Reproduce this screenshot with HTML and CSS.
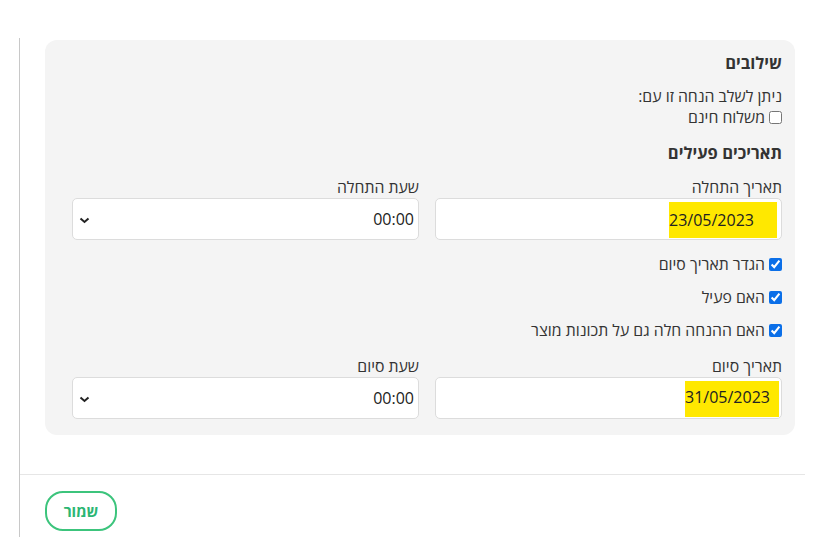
FILE: index.html
```html
<!DOCTYPE html>
<html lang="he" dir="rtl">
<head>
  <meta charset="utf-8">
  <title>הגדרות הנחה</title>
  <link rel="stylesheet" href="styles.css">
</head>
<body>
  <div class="page">
    <!-- Settings panel -->
    <div class="panel">
      <h3 class="section-title">שילובים</h3>
      <p class="text">ניתן לשלב הנחה זו עם:</p>
      <label class="check"><input type="checkbox"> משלוח חינם</label>

      <h3 class="section-title dates-title">תאריכים פעילים</h3>
      <div class="row">
        <div class="field">
          <div class="label">תאריך התחלה</div>
          <div class="control date"><span class="mark mark-start">23/05/2023</span></div>
        </div>
        <div class="field">
          <div class="label">שעת התחלה</div>
          <div class="control select">
            <span>00:00</span>
            <svg width="11" height="7" viewBox="0 0 11 7"><path d="M1.5 1.5 L5.5 5 L9.5 1.5" fill="none" stroke="#222" stroke-width="2"/></svg>
          </div>
        </div>
      </div>

      <label class="check check-row first"><input type="checkbox" checked> הגדר תאריך סיום</label>
      <label class="check check-row"><input type="checkbox" checked> האם פעיל</label>
      <label class="check check-row"><input type="checkbox" checked> האם ההנחה חלה גם על תכונות מוצר</label>

      <div class="row end-row">
        <div class="field">
          <div class="label">תאריך סיום</div>
          <div class="control date"><span class="mark mark-end">31/05/2023</span></div>
        </div>
        <div class="field">
          <div class="label">שעת סיום</div>
          <div class="control select">
            <span>00:00</span>
            <svg width="11" height="7" viewBox="0 0 11 7"><path d="M1.5 1.5 L5.5 5 L9.5 1.5" fill="none" stroke="#222" stroke-width="2"/></svg>
          </div>
        </div>
      </div>
    </div>

    <!-- Footer -->
    <div class="footer">
      <button class="save">שמור</button>
    </div>
  </div>
</body>
</html>
```

FILE: styles.css
```css
body {
  margin: 0;
  background: #fff;
  font-family: "Open Sans", "Noto Sans", sans-serif;
  color: #333;
  font-size: 15.8px;
}
/* left rule + content column */
.page {
  direction: ltr;
  margin: 38px auto 0 19px;
  width: 786px;
  min-height: 499px;
  border-left: 1px solid #c8c8c8;
  padding-top: 2px;
  box-sizing: border-box;
}
.panel {
  direction: rtl;
  margin-left: 25px;
  width: 750px;
  box-sizing: border-box;
  background: #f4f4f4;
  border-radius: 12px;
  padding: 12px 13px 16px 27px;
}
.section-title {
  margin: 0;
  font-size: 16.5px;
  line-height: 22px;
  font-weight: 700;
  color: #333;
}
.dates-title {
  margin-top: 14px;
}
.text {
  margin: 12px 0 0;
  line-height: 21px;
}
.check {
  display: flex;
  align-items: center;
  gap: 4px;
  line-height: 21px;
}
.check input {
  margin: 0;
  width: 13px;
  height: 13px;
  accent-color: #0b6fe8;
}
.check-row {
  margin-top: 12px;
}
.check-row.first {
  margin-top: 14px;
}
/* two-column date/time rows */
.row {
  display: flex;
  gap: 16px;
  margin-top: 13px;
}
.end-row {
  margin-top: 15px;
}
.field {
  flex: 1;
}
.label {
  line-height: 21px;
}
.control {
  height: 42px;
  box-sizing: border-box;
  background: #fff;
  border: 1px solid #dcdcdc;
  border-radius: 5px;
  display: flex;
  align-items: center;
  font-size: 16px;
  color: #222;
}
.date {
  align-items: stretch;
  padding: 3px 4px 1px;
}
.mark {
  box-sizing: border-box;
  background: #ffe800;
  display: flex;
  align-items: center;
  justify-content: flex-end;
  padding: 0 3px 0 0;
}
.mark-start {
  width: 108px;
}
.mark-end {
  width: 94px;
  margin-right: -2px;
  padding: 0 2px 4px 0;
}
.select {
  justify-content: space-between;
  padding: 0 4px 0 6px;
}
.select svg {
  margin-top: 2px;
}
.footer {
  margin-top: 39px;
  border-top: 1px solid #e6e6e6;
  padding: 16px 0 0 25px;
}
.save {
  font-family: "Open Sans", "Noto Sans", sans-serif;
  font-size: 15px;
  font-weight: 700;
  color: #2bb673;
  background: #fff;
  border: 2px solid #3cc47c;
  border-radius: 18px;
  width: 72px;
  height: 40px;
  cursor: pointer;
}
```
